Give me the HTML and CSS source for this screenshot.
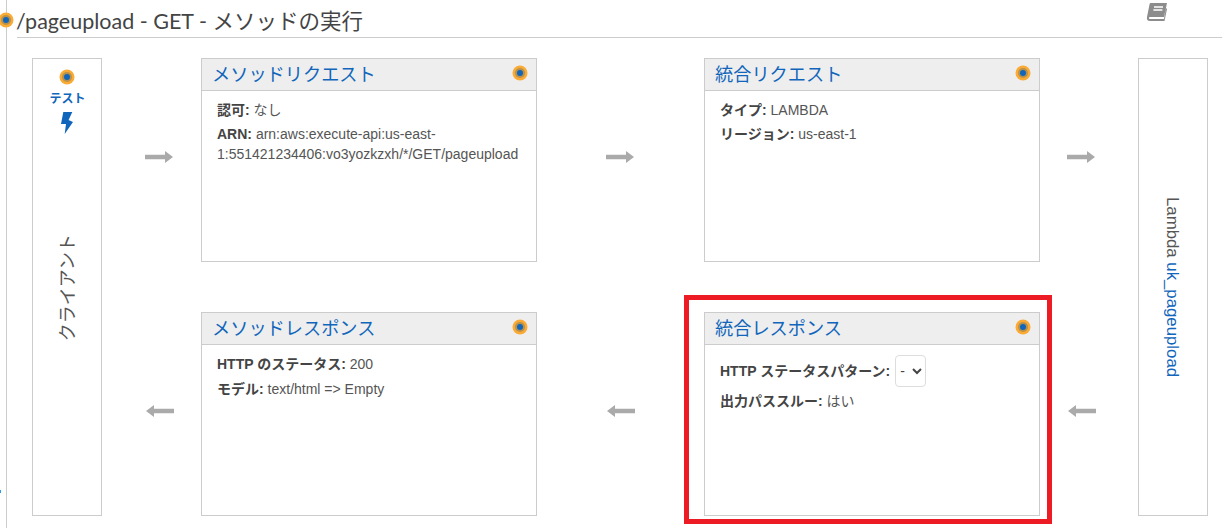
FILE: index.html
```html
<!DOCTYPE html>
<html lang="ja">
<head>
<meta charset="utf-8">
<title>/pageupload - GET - メソッドの実行</title>
<link rel="stylesheet" href="styles.css">
</head>
<body>
<svg width="0" height="0" class="defs">
  <defs>
    <g id="dot">
      <circle cx="8" cy="8" r="7.500" fill="#fbaa33"/>
      <circle cx="8" cy="8" r="5" fill="#b8924c"/>
      <circle cx="8" cy="8" r="3" fill="#1166bb"/>
    </g>
    <g id="arrow">
      <path d="M0 4.800H20V1L28 7L20 13V9.200H0Z" fill="#aaaaaa"/>
    </g>
  </defs>
</svg>
<main class="page">
  <svg class="dot rail-dot" viewBox="0 0 16 16"><use href="#dot"/></svg>
  <span class="rail-mark"></span>
  <header class="head">
    <h1 class="title">/pageupload - GET - メソッドの実行</h1>
    <svg class="book" viewBox="0 0 22 20"><path d="M5 1H21L18 15H4C3 15 2.600 16 3 16.500C3.300 17 4 17 5 17H18L20 6L21 7L18.500 19H4C1.500 19 .5 17.500 1 15L3.500 2.500C3.700 1.500 4 1 5 1Z" fill="#8c8c8c"/><path d="M8 5H17M7.400 8H16.400" stroke="#ffffff" stroke-width="1.400"/></svg>
  </header>
  <div class="flow">
    <aside class="side client">
      <a class="test">
        <svg class="dot" viewBox="0 0 16 16"><use href="#dot"/></svg>
        <span class="test-label">テスト</span>
        <svg class="bolt" viewBox="0 0 14 22"><path d="M2.300 0H11.300L7.600 8L12 10L3.700 22L5 12H0Z" fill="#1166bb"/></svg>
      </a>
      <span class="side-text up">クライアント</span>
    </aside>
    <div class="arrow a1"><svg viewBox="0 0 28 14"><use href="#arrow"/></svg></div>
    <section class="card">
      <h2 class="card-head"><a>メソッドリクエスト</a><svg class="dot" viewBox="0 0 16 16"><use href="#dot"/></svg></h2>
      <div class="card-body left tight">
        <p><b>認可:</b> なし</p>
        <p><b>ARN:</b> arn:aws:execute-api:us-east-1:551421234406:vo3yozkzxh/*/GET/pageupload</p>
      </div>
    </section>
    <div class="arrow a2"><svg viewBox="0 0 28 14"><use href="#arrow"/></svg></div>
    <section class="card">
      <h2 class="card-head"><a>統合リクエスト</a><svg class="dot" viewBox="0 0 16 16"><use href="#dot"/></svg></h2>
      <div class="card-body tight">
        <p><b>タイプ:</b> LAMBDA</p>
        <p><b>リージョン:</b> us-east-1</p>
      </div>
    </section>
    <div class="arrow a3"><svg viewBox="0 0 28 14"><use href="#arrow"/></svg></div>
    <aside class="side lambda">
      <span class="side-text down">Lambda <a>uk_pageupload</a></span>
    </aside>

    <div class="arrow a1b flip"><svg viewBox="0 0 28 14"><use href="#arrow"/></svg></div>
    <section class="card low-a">
      <h2 class="card-head"><a>メソッドレスポンス</a><svg class="dot" viewBox="0 0 16 16"><use href="#dot"/></svg></h2>
      <div class="card-body left">
        <p><b>HTTP のステータス:</b> 200</p>
        <p><b>モデル:</b> text/html =&gt; Empty</p>
      </div>
    </section>
    <div class="arrow a2b flip"><svg viewBox="0 0 28 14"><use href="#arrow"/></svg></div>
    <section class="card low-b">
      <h2 class="card-head"><a>統合レスポンス</a><svg class="dot" viewBox="0 0 16 16"><use href="#dot"/></svg></h2>
      <div class="card-body pattern">
        <p class="select-row"><b>HTTP ステータスパターン:</b> <select class="pick"><option>-</option></select></p>
        <p><b>出力パススルー:</b> はい</p>
      </div>
      <div class="highlight"></div>
    </section>
    <div class="arrow a3b flip"><svg viewBox="0 0 28 14"><use href="#arrow"/></svg></div>
  </div>
</main>
</body>
</html>
```
FILE: styles.css
```css
* { box-sizing: border-box; }
html, body { margin: 0; padding: 0; height: 100%; background: #ffffff; overflow: hidden; }
body { font-family: "Liberation Sans", "Noto Sans CJK JP", sans-serif; font-size: 14px; color: #555555; }
.defs { position: absolute; }
a { color: #1166bb; }
b { color: #444444; }
.page { position: relative; height: 528px; margin-left: 6px; border-left: 1px solid #cccccc; padding-left: 10px; }
.dot { display: block; width: 16px; height: 16px; }
.rail-dot { position: absolute; left: -9px; top: 12px; }
.rail-mark { position: absolute; left: -7px; top: 490px; width: 1px; height: 3px; background: #2a9fe8; }
.head { display: flex; justify-content: space-between; height: 38px; border-bottom: 1px solid #cccccc; }
.title { margin: 0 0 0 -1px; padding-top: 6px; font: 400 21.500px/30px Lato, "Noto Sans CJK JP", sans-serif; color: #444444; }
.book { width: 22px; height: 20px; margin: 2px 54px 0 0; }
.flow {
  display: grid;
  grid-template-columns: 70px 99px 336px 167px 336px 98px 70px;
  grid-template-rows: 204px 50px 204px;
  margin: 20px 0 0 15px;
}
.side { grid-row: 1 / 4; border: 1px solid #cccccc; position: relative; display: flex; justify-content: center; align-items: center; }
.test { position: absolute; top: 10px; left: -1px; right: 0; display: flex; flex-direction: column; align-items: center; }
.test-label { font-size: 12px; font-weight: 700; line-height: 16px; margin: 6px 0 0 2px; color: #1166bb; }
.bolt { width: 14px; height: 22px; margin: 5px 0 0 3px; }
.side-text { writing-mode: vertical-rl; text-orientation: sideways; font-size: 17px; color: #555555; white-space: nowrap; }
.side-text.up { font-size: 18px; transform: rotate(180deg); margin: 1px 2px 0 0; }
.side-text.down { font-size: 16.800px; margin-right: 3px; }
.arrow { display: flex; align-items: center; padding-bottom: 7px; }
.arrow svg { width: 28px; height: 14px; display: block; }
.a1 { padding-left: 43px; grid-row: 1; }
.a2 { padding-left: 69px; }
.a3 { padding-left: 27px; }
.a1b { grid-row: 3; grid-column: 2; padding-left: 44px; }
.a2b { grid-row: 3; grid-column: 4; padding-left: 70px; }
.a3b { grid-row: 3; grid-column: 6; padding-left: 28px; }
.flip svg { transform: scaleX(-1); }
.card { border: 1px solid #cccccc; position: relative; }
.low-a { grid-row: 3; grid-column: 3; }
.low-b { grid-row: 3; grid-column: 5; }
.card-head { display: flex; justify-content: space-between; align-items: center; height: 32px; margin: 0; padding: 0 8px 2px 10px; background: #eeeeee; border-bottom: 1px solid #cccccc; font: 400 18.200px/24px Lato, "Noto Sans CJK JP", sans-serif; }
.card-head .dot { margin-bottom: 2px; }
.card-body { padding: 9px 15px; line-height: 20px; }
.card-body p { margin: 0 0 5px; }
.card-body.tight p { margin-bottom: 4px; }
.card-body.pattern { padding-top: 10px; }
.card-body .select-row { display: flex; align-items: center; gap: 5px; height: 32px; margin-bottom: 4px; }
.pick { width: 31px; height: 32px; padding: 0; background: #ffffff; border: 1px solid #dddddd; border-radius: 4px; font: 14px "Liberation Sans", sans-serif; color: #444444; }
.highlight { position: absolute; left: -21px; top: -18px; width: 368px; height: 229px; border: 5px solid #ed1c24; pointer-events: none; }
```
